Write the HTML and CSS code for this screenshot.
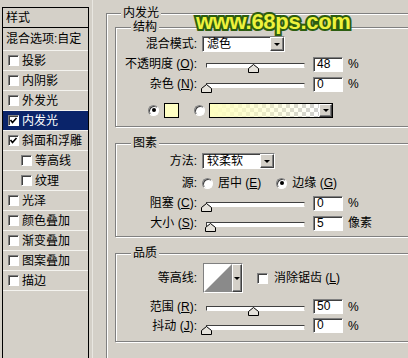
FILE: index.html
```html
<!DOCTYPE html>
<html lang="zh">
<head>
<meta charset="utf-8">
<title>图层样式</title>
<link rel="stylesheet" href="styles.css">
</head>
<body>
<div class="dialog">
  <ul class="list">
    <li class="head">样式</li>
    <li class="blend">混合选项:自定</li>
    <li><span class="cb"></span>投影</li>
    <li><span class="cb"></span>内阴影</li>
    <li><span class="cb"></span>外发光</li>
    <li class="sel"><span class="cb"><svg viewBox="0 0 9 9" width="9" height="9"><polyline points="1.5,4 3.5,6.5 7.5,2" fill="none" stroke="#000" stroke-width="1.6"/></svg></span>内发光</li>
    <li><span class="cb"><svg viewBox="0 0 9 9" width="9" height="9"><polyline points="1.5,4 3.5,6.5 7.5,2" fill="none" stroke="#000" stroke-width="1.6"/></svg></span>斜面和浮雕</li>
    <li class="sub"><span class="cb"></span>等高线</li>
    <li class="sub"><span class="cb"></span>纹理</li>
    <li><span class="cb"></span>光泽</li>
    <li><span class="cb"></span>颜色叠加</li>
    <li><span class="cb"></span>渐变叠加</li>
    <li><span class="cb"></span>图案叠加</li>
    <li><span class="cb"></span>描边</li>
  </ul>
  <div class="split"></div>
  <fieldset class="main">
    <legend>内发光</legend>

    <fieldset class="grp g1">
      <legend>结构</legend>
      <div class="row">
        <span class="lab">混合模式:</span>
        <div class="select w83"><span class="val">滤色</span><span class="drop"></span></div>
      </div>
      <div class="row">
        <span class="lab">不透明度 (<u>O</u>):</span>
        <div class="slider"><div class="track"></div><svg class="thumb" style="left:calc(48% - 5.5px)" viewBox="0 0 11 9" width="11" height="9"><polygon points="0.5,8.5 0.5,4.5 5.5,0.5 10.5,4.5 10.5,8.5" fill="#e6e3dc" stroke="#000"/></svg></div>
        <span class="num">48</span><span class="unit">%</span>
      </div>
      <div class="row">
        <span class="lab">杂色 (<u>N</u>):</span>
        <div class="slider"><div class="track"></div><svg class="thumb" style="left:calc(0% - 5.5px)" viewBox="0 0 11 9" width="11" height="9"><polygon points="0.5,8.5 0.5,4.5 5.5,0.5 10.5,4.5 10.5,8.5" fill="#e6e3dc" stroke="#000"/></svg></div>
        <span class="num">0</span><span class="unit">%</span>
      </div>
      <div class="row colors">
        <span class="radio on"></span>
        <span class="swatch"></span>
        <span class="radio r2"></span>
        <div class="grad"><span class="gfill"></span><span class="drop"></span></div>
      </div>
    </fieldset>

    <fieldset class="grp g2">
      <legend>图素</legend>
      <div class="row m1">
        <span class="lab">方法:</span>
        <div class="select w73"><span class="val">较柔软</span><span class="drop"></span></div>
      </div>
      <div class="row m2">
        <span class="lab">源:</span>
        <span class="radio src"></span><span class="rtxt">居中 (<u>E</u>)</span>
        <span class="radio on src2"></span><span class="rtxt">边缘 (<u>G</u>)</span>
      </div>
      <div class="row">
        <span class="lab">阻塞 (<u>C</u>):</span>
        <div class="slider"><div class="track"></div><svg class="thumb" style="left:calc(0% - 5.5px)" viewBox="0 0 11 9" width="11" height="9"><polygon points="0.5,8.5 0.5,4.5 5.5,0.5 10.5,4.5 10.5,8.5" fill="#e6e3dc" stroke="#000"/></svg></div>
        <span class="num">0</span><span class="unit">%</span>
      </div>
      <div class="row">
        <span class="lab">大小 (<u>S</u>):</span>
        <div class="slider"><div class="track"></div><svg class="thumb" style="left:calc(5% - 5.5px)" viewBox="0 0 11 9" width="11" height="9"><polygon points="0.5,8.5 0.5,4.5 5.5,0.5 10.5,4.5 10.5,8.5" fill="#e6e3dc" stroke="#000"/></svg></div>
        <span class="num">5</span><span class="unit">像素</span>
      </div>
    </fieldset>

    <fieldset class="grp g3">
      <legend>品质</legend>
      <div class="row tall">
        <span class="lab">等高线:</span>
        <div class="contour">
          <span class="cpic"><svg viewBox="0 0 28 28" width="28" height="28"><rect width="28" height="28" fill="#fff"/><polygon points="0,28 28,0 28,28" fill="#8a8a8a"/></svg></span>
          <span class="drop"></span>
        </div>
        <span class="cb aa"></span><span class="aatxt">消除锯齿 (<u>L</u>)</span>
      </div>
      <div class="row short r2a">
        <span class="lab">范围 (<u>R</u>):</span>
        <div class="slider"><div class="track"></div><svg class="thumb" style="left:calc(48% - 5.5px)" viewBox="0 0 11 9" width="11" height="9"><polygon points="0.5,8.5 0.5,4.5 5.5,0.5 10.5,4.5 10.5,8.5" fill="#e6e3dc" stroke="#000"/></svg></div>
        <span class="num">50</span><span class="unit">%</span>
      </div>
      <div class="row short">
        <span class="lab">抖动 (<u>J</u>):</span>
        <div class="slider"><div class="track"></div><svg class="thumb" style="left:calc(0% - 5.5px)" viewBox="0 0 11 9" width="11" height="9"><polygon points="0.5,8.5 0.5,4.5 5.5,0.5 10.5,4.5 10.5,8.5" fill="#e6e3dc" stroke="#000"/></svg></div>
        <span class="num">0</span><span class="unit">%</span>
      </div>
    </fieldset>
  </fieldset>
</div>
<div class="watermark">www.68ps.com</div>
</body>
</html>
```

FILE: styles.css
```css
* { box-sizing: border-box; }
html, body { margin: 0; padding: 0; }
body {
  width: 408px;
  height: 358px;
  overflow: hidden;
  position: relative;
  background: #d4d0c8;
  color: #000;
  font: 12px/14px "Liberation Sans", "Noto Sans CJK SC", sans-serif;
}
u { text-decoration: underline; text-underline-offset: 1px; }

.dialog { display: flex; align-items: flex-start; }

/* left style list */
.list {
  list-style: none;
  margin: 7px 0 0 2px;
  padding: 0;
  width: 87px;
  height: 360px;
  flex: none;
  border: 1px solid #000;
  border-bottom: none;
}
.list li {
  height: 20px;
  display: flex;
  align-items: center;
  gap: 3px;
  padding-left: 5px;
  border-bottom: 1px solid #f4f3ef;
  white-space: nowrap;
}
.list .head { padding-left: 3px; border-bottom-color: #000; }
.list .blend { height: 23px; padding-left: 3px; }
.list .sel { background: #0a246a; color: #fff; }
.list .sub { padding-left: 18px; }

.cb {
  width: 11px;
  height: 11px;
  flex: none;
  background: #fff;
  border: 1px solid;
  border-color: #808080 #fff #fff #808080;
  box-shadow: inset 1px 1px 0 #404040;
  display: flex;
  align-items: center;
  justify-content: center;
}
.cb svg { display: block; }

.split {
  width: 14px;
  height: 358px;
  flex: none;
  margin-left: 3px;
  border-left: 1px solid #e9e7e1;
}

/* group boxes */
fieldset {
  margin: 0;
  padding: 0;
  min-width: 0;
  border: 1px solid #808080;
  box-shadow: inset 1px 1px 0 #fff, 1px 1px 0 #fff;
}
legend {
  padding: 0 2px;
  line-height: 14px;
  background: #d4d0c8;
}
.main {
  flex: none;
  margin-top: 6px;
  width: 345px;
  height: 400px;
  padding: 0 0 0 8px;
}
.main > legend { margin-left: 6px; }
.grp { padding: 0 0 6px 0; }
.grp > legend { margin-left: 15px; }
.g2 { margin-top: 9px; padding-bottom: 3px; }
.g3 { margin-top: 9px; padding-bottom: 6px; }

/* rows */
.row {
  display: flex;
  align-items: center;
  height: 20px;
  white-space: nowrap;
}
.row.m1 { margin-top: 1px; }
.row.m2 { margin-top: 2px; }
.row.tall { height: 32px; margin-top: 2px; }
.row.short { height: 19px; }
.row.r2a { margin-top: 3px; }
.row.colors { margin-top: 6px; padding-left: 32px; }

.lab { width: 81px; flex: none; text-align: right; }

/* select */
.select {
  display: flex;
  height: 16px;
  margin-left: 5px;
  flex: none;
  background: #fff;
  border: 1px solid;
  border-color: #808080 #fff #fff #808080;
  box-shadow: inset 1px 1px 0 #404040;
}
.w83 { width: 83px; }
.w73 { width: 73px; }
.select .val { flex: 1; padding: 1px 0 0 4px; line-height: 13px; }
.drop {
  width: 14px;
  flex: none;
  background: #d4d0c8;
  border: 1px solid;
  border-color: #fff #404040 #404040 #fff;
  box-shadow: inset -1px -1px 0 #808080;
  display: flex;
  align-items: center;
  justify-content: center;
}
.drop::after {
  content: "";
  border-style: solid;
  border-width: 3px 3px 0 3px;
  border-color: #000 transparent transparent transparent;
}

/* slider */
.slider {
  position: relative;
  width: 99px;
  height: 14px;
  margin-left: 9px;
  flex: none;
}
.track {
  margin-top: 6px;
  height: 5px;
  background: #fff;
  border: 1px solid;
  border-color: #404040 #d4d0c8 #fff #404040;
}
.thumb { position: absolute; top: 7px; display: block; }

.num {
  width: 30px;
  height: 15px;
  flex: none;
  margin-left: 8px;
  padding-left: 3px;
  line-height: 13px;
  background: #fff;
  border: 1px solid;
  border-color: #808080 #fff #fff #808080;
  box-shadow: inset 1px 1px 0 #404040;
}
.unit { margin-left: 5px; }

/* radios */
.radio {
  width: 11px;
  height: 11px;
  flex: none;
  border-radius: 50%;
  background: #fff;
  border: 1px solid;
  border-color: #808080 #fff #fff #808080;
  box-shadow: inset 1px 1px 0 #404040;
  display: flex;
  align-items: center;
  justify-content: center;
}
.radio.on::after {
  content: "";
  width: 4px;
  height: 4px;
  border-radius: 50%;
  background: #000;
}
.radio.r2 { margin-left: 15px; }
.radio.src { margin-left: 5px; }
.radio.src2 { margin-left: 15px; }
.rtxt { margin-left: 5px; }

.swatch {
  width: 15px;
  height: 15px;
  flex: none;
  margin-left: 5px;
  background: #ffffc4;
  border: 1px solid #000;
}
.grad {
  display: flex;
  height: 15px;
  margin-left: 4px;
  flex: none;
  border: 1px solid #000;
}
.gfill {
  width: 109px;
  background:
    linear-gradient(to right, #ffffc0 0%, rgba(255,255,192,0.6) 45%, rgba(255,255,192,0) 100%),
    repeating-conic-gradient(#cfcfcf 0 25%, #ffffff 0 50%) 0 0 / 8px 8px;
}
.grad .drop { width: 13px; }

/* contour */
.contour {
  display: flex;
  width: 40px;
  height: 30px;
  margin-left: 6px;
  flex: none;
  border: 1px solid;
  border-color: #808080 #fff #fff #808080;
  background: #fff;
}
.cpic { width: 28px; height: 28px; flex: none; }
.cpic svg { display: block; }
.contour .drop { width: 10px; }
.cb.aa { margin-left: 14px; }
.aatxt { margin-left: 6px; }

/* watermark overlay */
.watermark {
  position: absolute;
  left: 196px;
  top: 9px;
  font: bold 22px/26px "Liberation Sans", Arial, sans-serif;
  letter-spacing: -0.3px;
  color: #eef23c;
  -webkit-text-stroke: 4px #2c5d10;
  paint-order: stroke fill;
}
```
